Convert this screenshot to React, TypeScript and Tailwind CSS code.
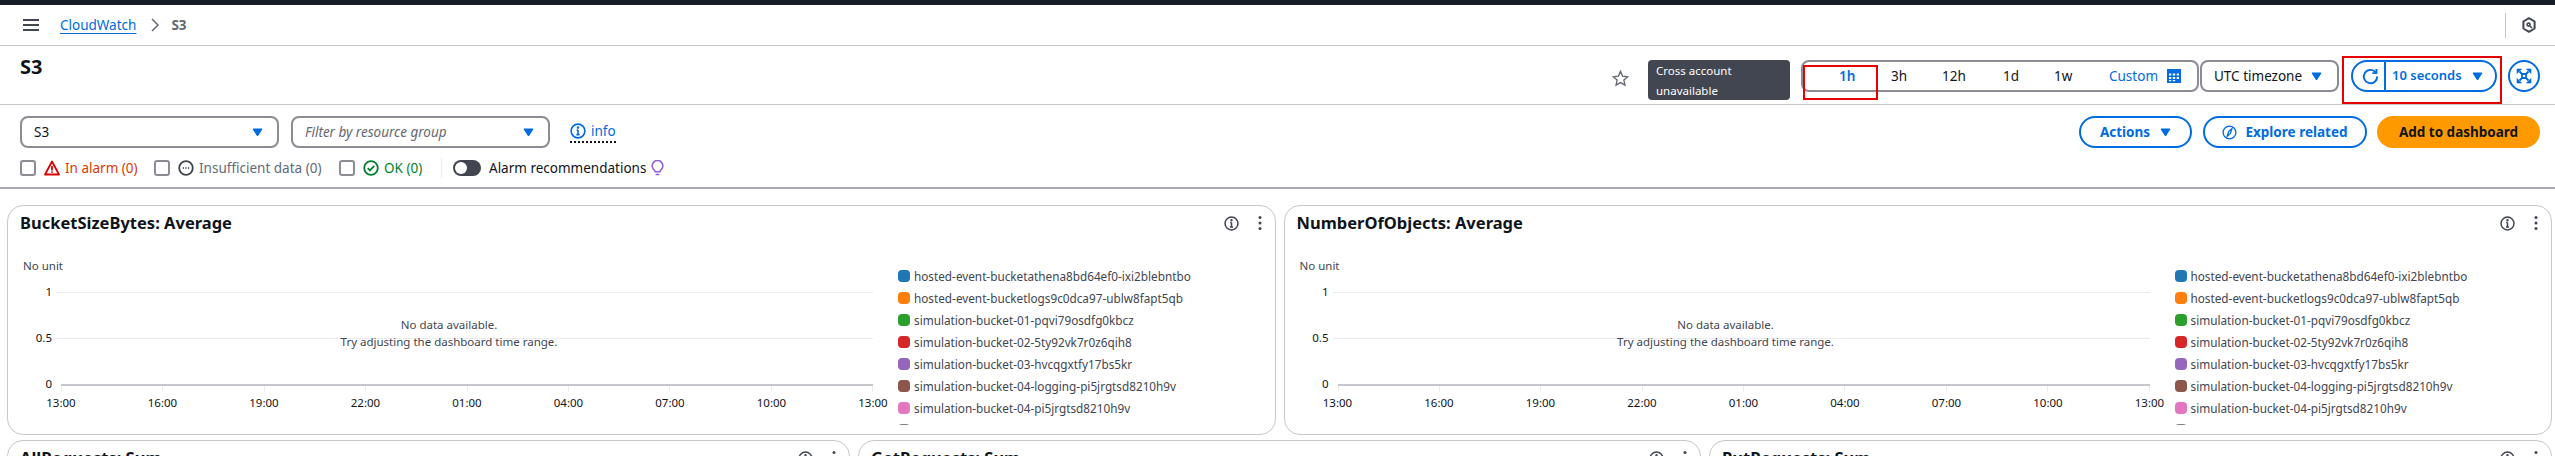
import React from "react";

const font = "font-['Noto_Sans',sans-serif]";

const Caret = ({ className = "" }: { className?: string }) => (
  <svg viewBox="0 0 11 9" className={`w-[11px] h-[9px] shrink-0 ${className}`}>
    <path d="M1 1h9L5.5 8z" fill="currentColor" stroke="currentColor" strokeWidth="1" strokeLinejoin="round" />
  </svg>
);

const InfoCircle = ({ className = "" }: { className?: string }) => (
  <svg viewBox="0 0 16 16" className={className} fill="none" stroke="currentColor" strokeWidth="1.6">
    <circle cx="8" cy="8" r="6.9" />
    <path d="M8 7v4.6M6.4 11.6h3.2M6.6 7h1.4" />
    <circle cx="8" cy="4.6" r="0.5" fill="currentColor" />
  </svg>
);

const Checkbox = () => (
  <span className="block w-4 h-4 shrink-0 rounded-[3px] border-2 border-[#8c8c94] bg-white" />
);

const legend = [
  ["#1f77b4", "hosted-event-bucketathena8bd64ef0-ixi2blebntbo"],
  ["#ff7f0e", "hosted-event-bucketlogs9c0dca97-ublw8fapt5qb"],
  ["#2ca02c", "simulation-bucket-01-pqvi79osdfg0kbcz"],
  ["#d62728", "simulation-bucket-02-5ty92vk7r0z6qih8"],
  ["#9467bd", "simulation-bucket-03-hvcqgxtfy17bs5kr"],
  ["#8c564b", "simulation-bucket-04-logging-pi5jrgtsd8210h9v"],
  ["#e377c2", "simulation-bucket-04-pi5jrgtsd8210h9v"],
  ["#7f7f7f", ""],
];

const times = ["13:00", "16:00", "19:00", "22:00", "01:00", "04:00", "07:00", "10:00", "13:00"];

const PanelHead = ({ title }: { title: string }) => (
  <div className="flex items-center justify-between h-6 pl-[12px] pr-[13px]">
    <span className="text-[16.5px] font-bold text-[#0f141a]">{title}</span>
    <div className="flex items-center gap-[19px] text-[#424650]">
      <InfoCircle className="w-[15px] h-[15px]" />
      <svg viewBox="0 0 4 16" className="w-1 h-4" fill="currentColor">
        <circle cx="2" cy="2.5" r="1.5" />
        <circle cx="2" cy="8" r="1.5" />
        <circle cx="2" cy="13.5" r="1.5" />
      </svg>
    </div>
  </div>
);

const Chart = () => (
  <div className="flex mt-[20px] h-[170px] overflow-hidden">
    <div className="w-[890px] shrink-0 relative text-[11.5px] text-[#424650]">
      <div className="leading-4 h-4 mt-[3px] ml-[15px]">No unit</div>
      <div className="flex flex-col mt-[18px]">
        {["1", "0.5"].map((v) => (
          <div key={v} className="flex items-start h-[46px]">
            <span className="w-[44px] text-right text-[#0f141a] leading-[14px] -mt-[7px]">{v}</span>
            <span className="w-[817px] ml-1 h-px bg-[#ebebf0]" />
          </div>
        ))}
        <div className="flex items-start">
          <span className="w-[44px] text-right text-[#0f141a] leading-[14px] -mt-[7px]">0</span>
          <div className="ml-[9px] w-[812px]">
            <div className="h-[2px] bg-[#c6c6cd]" />
            <div className="grid grid-cols-8 h-[6px] border-l border-[#ebebf0]">
              {times.slice(1).map((t, i) => (
                <div key={i} className="border-r border-[#ebebf0]" />
              ))}
            </div>
          </div>
        </div>
        <div className="flex justify-between w-[852px] ml-[33px] mt-[3px] text-[#0f141a] leading-4">
          {times.map((t, i) => (
            <span key={i} className="w-[40px] text-center">{t}</span>
          ))}
        </div>
      </div>
      <div className="absolute left-[332px] top-[61px] w-[218px] text-center leading-[17px] text-[#424650]">
        <div>No data available.</div>
        <div>Try adjusting the dashboard time range.</div>
      </div>
    </div>
    <div className="flex flex-col text-[11.75px] text-[#424650] mt-[10px]">
      {legend.map(([c, t]) => (
        <div key={c} className="flex items-center h-[22px] shrink-0 leading-[22px] whitespace-nowrap">
          <span className="w-3 h-3 rounded-[4px] shrink-0 mr-1" style={{ backgroundColor: c }} />
          {t}
        </div>
      ))}
    </div>
  </div>
);

const Panel = ({ title, chart = true }: { title: string; chart?: boolean }) => (
  <section className="rounded-2xl border border-[#c6c6cd] bg-white pt-[5px] h-[230px]">
    <PanelHead title={title} />
    {chart && <Chart />}
  </section>
);

export default function App() {
  return (
    <div className={`${font} relative h-[456px] w-[2555px] overflow-hidden bg-white text-[13.5px] text-[#0f141a]`}>
      <div className="h-[5px] bg-[#161d26]" />
      <nav className="h-[41px] flex items-center border-b border-[#c6c6cd] pl-[23px] pr-[18px]">
        <svg viewBox="0 0 16 12" className="w-4 h-3 text-[#424650]" fill="none" stroke="currentColor" strokeWidth="2">
          <path d="M0 1h16M0 6h16M0 11h16" />
        </svg>
        <a className="ml-[21px] text-[#006ce0] underline underline-offset-[3px]">CloudWatch</a>
        <svg viewBox="0 0 8 14" className="w-2 h-[14px] ml-[15px] text-[#656871]" fill="none" stroke="currentColor" strokeWidth="1.5">
          <path d="M1 1l6 6-6 6" />
        </svg>
        <span className="ml-[12px] font-bold text-[#656871]">S3</span>
        <div className="ml-auto flex items-center h-[25px] border-l border-[#c6c6cd] pl-[15px]">
          <svg viewBox="0 0 16 16" className="w-4 h-4 text-[#424650]" fill="none" stroke="currentColor" strokeWidth="2">
            <path d="M8 1.2l5.6 3.3v7L8 14.8l-5.6-3.3v-7z" strokeLinejoin="round" />
            <circle cx="7.6" cy="7.6" r="1.5" strokeWidth="1.6" />
            <path d="M9 9l2 2" strokeWidth="1.6" />
          </svg>
        </div>
      </nav>

      <header className="h-[59px] flex items-start border-b border-[#c6c6cd] pl-5 pr-[15px]">
        <h1 className="text-[20px] font-bold leading-6 mt-[9px]">S3</h1>
        <div className="ml-auto flex items-start mt-[14px]">
          <svg viewBox="0 0 16 16" className="w-[17px] h-[17px] mt-[10px] text-[#656871]" fill="none" stroke="currentColor" strokeWidth="1.3">
            <path d="M8 1.3l2 4.5 4.8.5-3.6 3.2 1 4.8L8 11.9l-4.2 2.4 1-4.8L1.2 6.3 6 5.8z" />
          </svg>
          <div className="ml-[19px] w-[142px] h-10 rounded bg-[#424650] text-white text-[11.5px] leading-5 pl-2 pt-px">
            Cross account
            <br />
            unavailable
          </div>
          <div className="relative ml-[11px] w-[398px] h-8 rounded-lg border-2 border-[#8c8c94]">
            <span className="absolute left-[36px] top-[4px] text-[#006ce0] font-semibold">1h</span>
            <span className="absolute left-[88px] top-[4px]">3h</span>
            <span className="absolute left-[139px] top-[4px]">12h</span>
            <span className="absolute left-[200px] top-[4px]">1d</span>
            <span className="absolute left-[251px] top-[4px]">1w</span>
            <span className="absolute left-[306px] top-[4px] text-[#006ce0]">Custom</span>
            <svg viewBox="0 0 14 14" className="absolute left-[364px] top-[7px] w-[14px] h-[14px] text-[#006ce0]">
              <rect width="14" height="14" fill="currentColor" />
              <path d="M2 4.5h2.3v2H2zM5.8 4.5h2.4v2H5.8zM9.7 4.5H12v2H9.7zM2 8h2.3v2H2zM5.8 8h2.4v2H5.8zM9.7 8H12v2H9.7zM2 11h2.3v1.3H2zM5.8 11h2.4v1.3H5.8z" fill="white" />
            </svg>
            <span className="absolute left-0 top-[3px] w-[75px] h-[35px] border-2 border-[#e60000]" />
          </div>
          <div className="ml-px w-[139px] h-8 rounded-lg border-2 border-[#8c8c94] flex items-center pl-[12px] gap-[9px] whitespace-nowrap">
            UTC timezone
            <Caret className="text-[#006ce0]" />
          </div>
          <div className="relative ml-[12px] w-[146px] h-8 rounded-full border-2 border-[#006ce0] text-[#006ce0] flex items-center font-semibold">
            <svg viewBox="0 0 16 16" className="w-[17px] h-[17px] ml-[9px] shrink-0" fill="none" stroke="currentColor" strokeWidth="1.8">
              <path d="M13 4.2A6.3 6.3 0 1 0 14.3 8" />
              <path d="M13.6 1v3.8H9.8" />
            </svg>
            <span className="w-[2px] h-full bg-[#006ce0] ml-[5px] shrink-0" />
            <span className="ml-[6px] mr-[10px] whitespace-nowrap text-[13px]">10 seconds</span>
            <Caret />
            <span className="absolute -left-[11px] -top-[6px] w-[160px] h-[48px] border-2 border-[#e60000]" />
          </div>
          <div className="ml-[11px] w-8 h-8 rounded-full border-2 border-[#006ce0] text-[#006ce0] flex items-center justify-center">
            <svg viewBox="0 0 16 16" className="w-4 h-4" fill="currentColor" stroke="currentColor" strokeWidth="1.8">
              <path d="M1 1h4.5L1 5.5zM15 1h-4.5L15 5.5zM1 15h4.5L1 10.5zM15 15h-4.5l4.5-4.5z" strokeWidth="0.6" />
              <path d="M3.5 3.5l3 3M12.5 3.5l-3 3M3.5 12.5l3-3M12.5 12.5l-3-3M6 6h4v4H6z" fill="none" />
            </svg>
          </div>
        </div>
      </header>

      <div className="h-[84px] border-b-2 border-[#a9a9b1] pl-5 pr-[15px] pt-[11px]">
        <div className="flex items-center h-8">
          <div className="w-[259px] h-8 rounded-lg border-2 border-[#8c8c94] flex items-center justify-between pl-3 pr-[14px]">
            S3 <Caret className="text-[#006ce0]" />
          </div>
          <div className="ml-3 w-[259px] h-8 rounded-lg border-2 border-[#8c8c94] flex items-center justify-between pl-3 pr-[14px] italic text-[#656871]">
            Filter by resource group <Caret className="text-[#006ce0]" />
          </div>
          <span className="ml-5 h-[22px] flex items-center gap-[5px] text-[#006ce0] border-b-2 border-dotted border-[#0f141a]">
            <InfoCircle className="w-4 h-4" />
            info
          </span>
          <button className="ml-auto w-[113px] h-8 rounded-full border-2 border-[#006ce0] text-[#006ce0] font-bold flex items-center justify-center gap-[10px]">
            Actions <Caret />
          </button>
          <button className="ml-[11px] w-[164px] h-8 rounded-full border-2 border-[#006ce0] text-[#006ce0] font-bold flex items-center justify-center gap-[8px] whitespace-nowrap">
            <svg viewBox="0 0 16 16" className="w-[15px] h-[15px]" fill="none" stroke="currentColor" strokeWidth="1.4">
              <circle cx="8" cy="8" r="6.8" />
              <path d="M10.5 4L9 9 5.5 12 7 7z" />
            </svg>
            Explore related
          </button>
          <button className="ml-[10px] w-[163px] h-8 rounded-full bg-[#ff9900] font-bold text-[#0f141a] whitespace-nowrap">
            Add to dashboard
          </button>
        </div>
        <div className="flex items-center h-6 mt-[8px] whitespace-nowrap">
          <Checkbox />
          <svg viewBox="0 0 16 16" className="ml-2 w-4 h-4 text-[#db0000]" fill="none" stroke="currentColor" strokeWidth="1.8">
            <path d="M8 1.5L15 14.5H1z" strokeLinejoin="round" />
            <path d="M8 6v4.5M8 11.6v1.2" />
          </svg>
          <span className="ml-[5px] w-[74px] text-[#db3a00]">In alarm (0)</span>
          <span className="ml-[15px]"><Checkbox /></span>
          <svg viewBox="0 0 16 16" className="ml-2 w-4 h-4 text-[#424650]" fill="none" stroke="currentColor" strokeWidth="1.8">
            <circle cx="8" cy="8" r="6.8" />
            <path d="M4.8 8h1M7.5 8h1M10.2 8h1" />
          </svg>
          <span className="ml-[5px] w-[124px] text-[#5f6b7a]">Insufficient data (0)</span>
          <span className="ml-4"><Checkbox /></span>
          <svg viewBox="0 0 16 16" className="ml-2 w-4 h-4 text-[#00802f]" fill="none" stroke="currentColor" strokeWidth="1.8">
            <circle cx="8" cy="8" r="6.8" />
            <path d="M4.8 8.2l2.2 2.2 4.2-4.6" />
          </svg>
          <span className="ml-[5px] w-[41px] text-[#00802f]">OK (0)</span>
          <span className="ml-4 w-px h-5 bg-[#ebebf0]" />
          <span className="ml-[11px] w-7 h-4 rounded-full bg-[#424650] relative">
            <span className="absolute left-[2px] top-[2px] w-3 h-3 rounded-full bg-white" />
          </span>
          <span className="ml-2">Alarm recommendations</span>
          <svg viewBox="0 0 14 18" className="ml-[5px] w-[13px] h-[17px] text-[#8f5fe0]" fill="none" stroke="currentColor" strokeWidth="1.7">
            <path d="M4.5 12.5C4 10.5 1.2 9.5 1.2 6.2a5.8 5.8 0 0 1 11.6 0c0 3.3-2.8 4.3-3.3 6.3zM5 15.5h4" />
          </svg>
        </div>
      </div>

      <main className="pl-[7px] pr-[3px] pt-4 flex flex-col gap-[5px]">
        <div className="grid grid-cols-2 gap-2">
          <Panel title="BucketSizeBytes: Average" />
          <Panel title="NumberOfObjects: Average" />
        </div>
        <div className="grid grid-cols-3 gap-2">
          <Panel title="AllRequests: Sum" chart={false} />
          <Panel title="GetRequests: Sum" chart={false} />
          <Panel title="PutRequests: Sum" chart={false} />
        </div>
      </main>
    </div>
  );
}
